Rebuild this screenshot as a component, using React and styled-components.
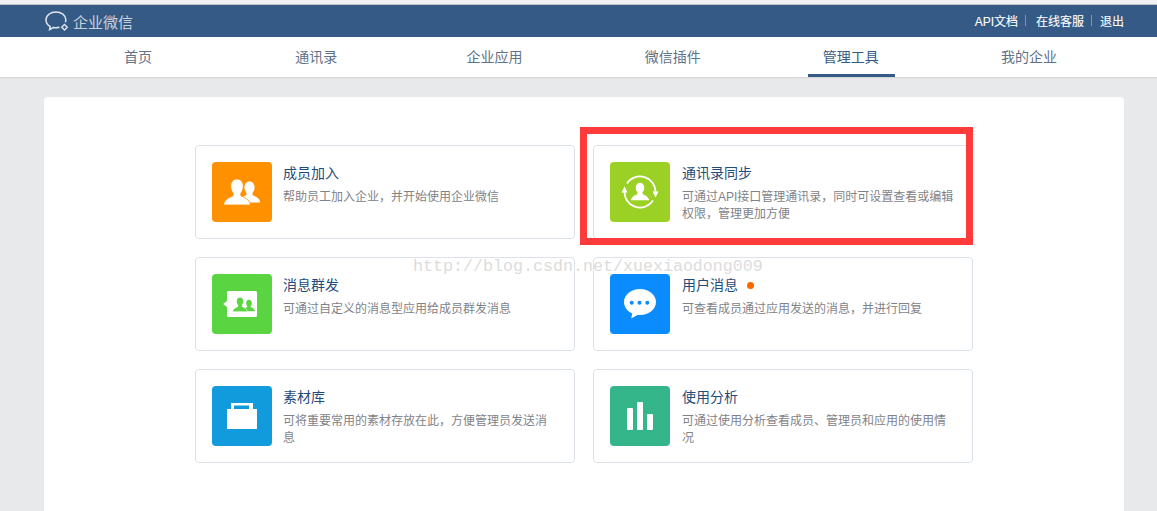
import React from "react";
import styled, { createGlobalStyle } from "styled-components";

const GlobalStyle = createGlobalStyle`
  html, body {
    margin: 0;
    padding: 0;
    background: #e8e9eb;
  }
  body {
    font-family: "Liberation Sans", "Noto Sans CJK SC", sans-serif;
  }
`;

const Page = styled.div`
  position: relative;
  width: 1157px;
  height: 511px;
  overflow: hidden;
  background: #e8e9eb;
`;

const TopStrip = styled.div`
  height: 4px;
  background: #f1f1f1;
  border-bottom: 1px solid #c4c4c4;
`;

const Header = styled.header`
  height: 32px;
  background: #345a85;
  display: flex;
  align-items: center;
  justify-content: space-between;
  padding: 0 33px 0 44px;
`;

const Brand = styled.div`
  display: flex;
  align-items: center;
  color: #c6d1de;
  font-size: 15px;
`;

const HeaderLinks = styled.nav`
  display: flex;
  align-items: center;
  margin-top: -2px;
  color: #fff;
  font-size: 12px;
  -webkit-text-stroke: 0.1px #fff;
`;

const Divider = styled.span`
  width: 1px;
  height: 11px;
  background: #7d94ad;
  margin: ${({ $wide }) => ($wide ? "0 10px 0 7px" : "0 8px 0 7px")};
`;

const NavBar = styled.nav`
  height: 40px;
  background: #fff;
  box-shadow: 0 1px 1px #d6d6d6;
  display: grid;
  grid-template-columns: repeat(6, 178.2px);
  padding-left: 49px;
`;

const NavItem = styled.a`
  display: flex;
  align-items: center;
  justify-content: center;
  padding-bottom: 2px;
  color: ${({ $active }) => ($active ? "#345a85" : "#5f7287")};
  font-size: 14px;
  position: relative;
  ${({ $active }) =>
    $active &&
    `&::after {
      content: "";
      position: absolute;
      left: 46px;
      bottom: 0;
      width: 87px;
      height: 3px;
      background: #345a85;
    }`}
`;

const Main = styled.main`
  padding: 20px 33px 0 44px;
`;

const Panel = styled.section`
  height: 500px;
  background: #fff;
  border-radius: 4px;
  padding: 48px 0 0 151px;
`;

const TileGrid = styled.div`
  display: grid;
  grid-template-columns: repeat(2, 380px);
  grid-auto-rows: 94px;
  gap: 18px;
`;

const Tile = styled.div`
  box-sizing: border-box;
  display: flex;
  gap: 11px;
  padding: 16px;
  background: #fff;
  border: 1px solid #dde2e8;
  border-radius: 4px;
  &:nth-child(even) {
    gap: 12px;
  }
`;

const IconBox = styled.div`
  flex: none;
  width: 60px;
  height: 60px;
  border-radius: 4px;
  background: ${({ $color }) => $color};
  svg {
    display: block;
  }
`;

const TileText = styled.div`
  width: 275px;
`;

const TileTitle = styled.div`
  display: flex;
  align-items: center;
  gap: 9px;
  height: 22px;
  color: #1f4c7c;
  font-size: 14px;
  line-height: 22px;
`;

const Dot = styled.span`
  width: 7px;
  height: 7px;
  border-radius: 50%;
  background: #f60;
`;

const TileDesc = styled.div`
  margin-top: 5px;
  color: #7f8388;
  font-size: 12px;
  line-height: 17px;
`;

const Watermark = styled.div`
  position: absolute;
  left: 413px;
  top: 257px;
  color: #dcdcdc;
  font-family: "Liberation Mono", monospace;
  font-size: 16.67px;
  line-height: 20px;
  white-space: nowrap;
  pointer-events: none;
`;

const Highlight = styled.div`
  position: absolute;
  left: 580px;
  top: 127px;
  box-sizing: border-box;
  width: 393px;
  height: 118px;
  border: 7px solid #ff3a3a;
  pointer-events: none;
`;

const PERSON =
  "M0 -13c-3.800 0-6.300 3-6.300 7.200 0 3 1.100 5.400 2.500 7v2.400c-2 1.600-8.700 2.800-9.700 9.400h27c-1-6.600-7.700-7.800-9.700-9.400V1.200c1.400-1.600 2.500-4 2.500-7 0-4.200-2.500-7.200-6.300-7.200z";

const Glyph = ({ children }) => (
  <svg width="60" height="60" viewBox="0 0 60 60">
    {children}
  </svg>
);

const UsersIcon = () => (
  <Glyph>
    <path d={PERSON} fill="#fff" transform="translate(37.500 30) scale(.8)" />
    <path
      d={PERSON}
      fill="#fff"
      stroke="#ff9000"
      strokeWidth=".8"
      transform="translate(25 30)"
    />
  </Glyph>
);

const SyncIcon = () => (
  <Glyph>
    <path d="M17 21.500A15.500 15.500 0 0 1 45.500 30" fill="none" stroke="#fff" strokeWidth="1.700" />
    <path d="M43 38.500A15.500 15.500 0 0 1 14.500 30" fill="none" stroke="#fff" strokeWidth="1.700" />
    <path d="M14.500 24.500l-3 6h6zM45.500 35.500l-3-6h6z" fill="#fff" />
    <path d={PERSON} fill="#fff" transform="translate(30 29.500) scale(.68)" />
  </Glyph>
);

const BroadcastIcon = () => (
  <Glyph>
    <path
      d="M16.500 17h27a1.500 1.500 0 0 1 1.500 1.500v23a1.500 1.500 0 0 1-1.500 1.500h-27a1.500 1.500 0 0 1-1.500-1.500V33l-3.800-3 3.800-3v-8.500a1.500 1.500 0 0 1 1.500-1.500z"
      fill="#fff"
    />
    <path d={PERSON} fill="#5ad440" transform="translate(37 31.500) scale(.45)" />
    <path
      d={PERSON}
      fill="#5ad440"
      stroke="#fff"
      strokeWidth="1"
      transform="translate(28 30.500) scale(.55)"
    />
  </Glyph>
);

const ChatIcon = () => (
  <Glyph>
    <path
      d="M30 15c-8.800 0-16 5.800-16 13 0 5 3.300 9.300 8.200 11.500l-1 5 6.300-3.600c.8.100 1.700.1 2.500.1 8.800 0 16-5.800 16-13s-7.200-13-16-13z"
      fill="#fff"
    />
    <circle cx="21.700" cy="28.700" r="2" fill="#0a8cff" />
    <circle cx="29.500" cy="28.700" r="2" fill="#0a8cff" />
    <circle cx="37.300" cy="28.700" r="2" fill="#0a8cff" />
  </Glyph>
);

const CaseIcon = () => (
  <Glyph>
    <path
      d="M19 17h22v6h4v20H15V23h4zM22 19.500V23h15v-3.500z"
      fill="#fff"
      fillRule="evenodd"
    />
  </Glyph>
);

const BarsIcon = () => (
  <Glyph>
    <rect x="17" y="22" width="6" height="22" rx="1" fill="#fff" />
    <rect x="27" y="16" width="6" height="28" rx="1" fill="#fff" />
    <rect x="37" y="28" width="6" height="16" rx="1" fill="#fff" />
  </Glyph>
);

const Logo = () => (
  <svg width="29" height="24" viewBox="0 0 29 24">
    <path
      d="M12 3C6.500 3 2 6.400 2 11c0 2.800 1.600 5.100 4.200 6.600L5.600 20.500l3.800-2c.9.200 1.800.3 2.600.3 1.200 0 2.400-.2 3.500-.5"
      fill="none"
      stroke="#dfe6ee"
      strokeWidth="1.500"
    />
    <path
      d="M12 3c5.500 0 9.500 3.400 9.800 7.500.1 1-.1 2-.4 2.800"
      fill="none"
      stroke="#dfe6ee"
      strokeWidth="1.500"
    />
    <path
      d="M20.500 15.500l2.800 2.800-2.800 2.800-2.800-2.800z"
      fill="none"
      stroke="#dfe6ee"
      strokeWidth="1.400"
    />
  </svg>
);

const navItems = ["首页", "通讯录", "企业应用", "微信插件", "管理工具", "我的企业"];

const tiles = [
  {
    title: "成员加入",
    desc: "帮助员工加入企业，并开始使用企业微信",
    color: "#ff9000",
    icon: <UsersIcon />,
  },
  {
    title: "通讯录同步",
    desc: "可通过API接口管理通讯录，同时可设置查看或编辑权限，管理更加方便",
    color: "#9bd025",
    icon: <SyncIcon />,
  },
  {
    title: "消息群发",
    desc: "可通过自定义的消息型应用给成员群发消息",
    color: "#5ad440",
    icon: <BroadcastIcon />,
  },
  {
    title: "用户消息",
    desc: "可查看成员通过应用发送的消息，并进行回复",
    color: "#0a8cff",
    icon: <ChatIcon />,
    dot: true,
  },
  {
    title: "素材库",
    desc: "可将重要常用的素材存放在此，方便管理员发送消息",
    color: "#129bdc",
    icon: <CaseIcon />,
  },
  {
    title: "使用分析",
    desc: "可通过使用分析查看成员、管理员和应用的使用情况",
    color: "#34b58a",
    icon: <BarsIcon />,
  },
];

const App = () => (
  <Page>
    <GlobalStyle />
    <TopStrip />
    <Header>
      <Brand>
        <Logo />
        企业微信
      </Brand>
      <HeaderLinks>
        API文档
        <Divider $wide />
        在线客服
        <Divider />
        退出
      </HeaderLinks>
    </Header>
    <NavBar>
      {navItems.map((item) => (
        <NavItem key={item} $active={item === "管理工具"}>
          {item}
        </NavItem>
      ))}
    </NavBar>
    <Main>
      <Panel>
        <TileGrid>
          {tiles.map((tile) => (
            <Tile key={tile.title}>
              <IconBox $color={tile.color}>{tile.icon}</IconBox>
              <TileText>
                <TileTitle>
                  {tile.title}
                  {tile.dot && <Dot />}
                </TileTitle>
                <TileDesc>{tile.desc}</TileDesc>
              </TileText>
            </Tile>
          ))}
        </TileGrid>
      </Panel>
    </Main>
    <Watermark>http://blog.csdn.net/xuexiaodong009</Watermark>
    <Highlight />
  </Page>
);

export default App;
